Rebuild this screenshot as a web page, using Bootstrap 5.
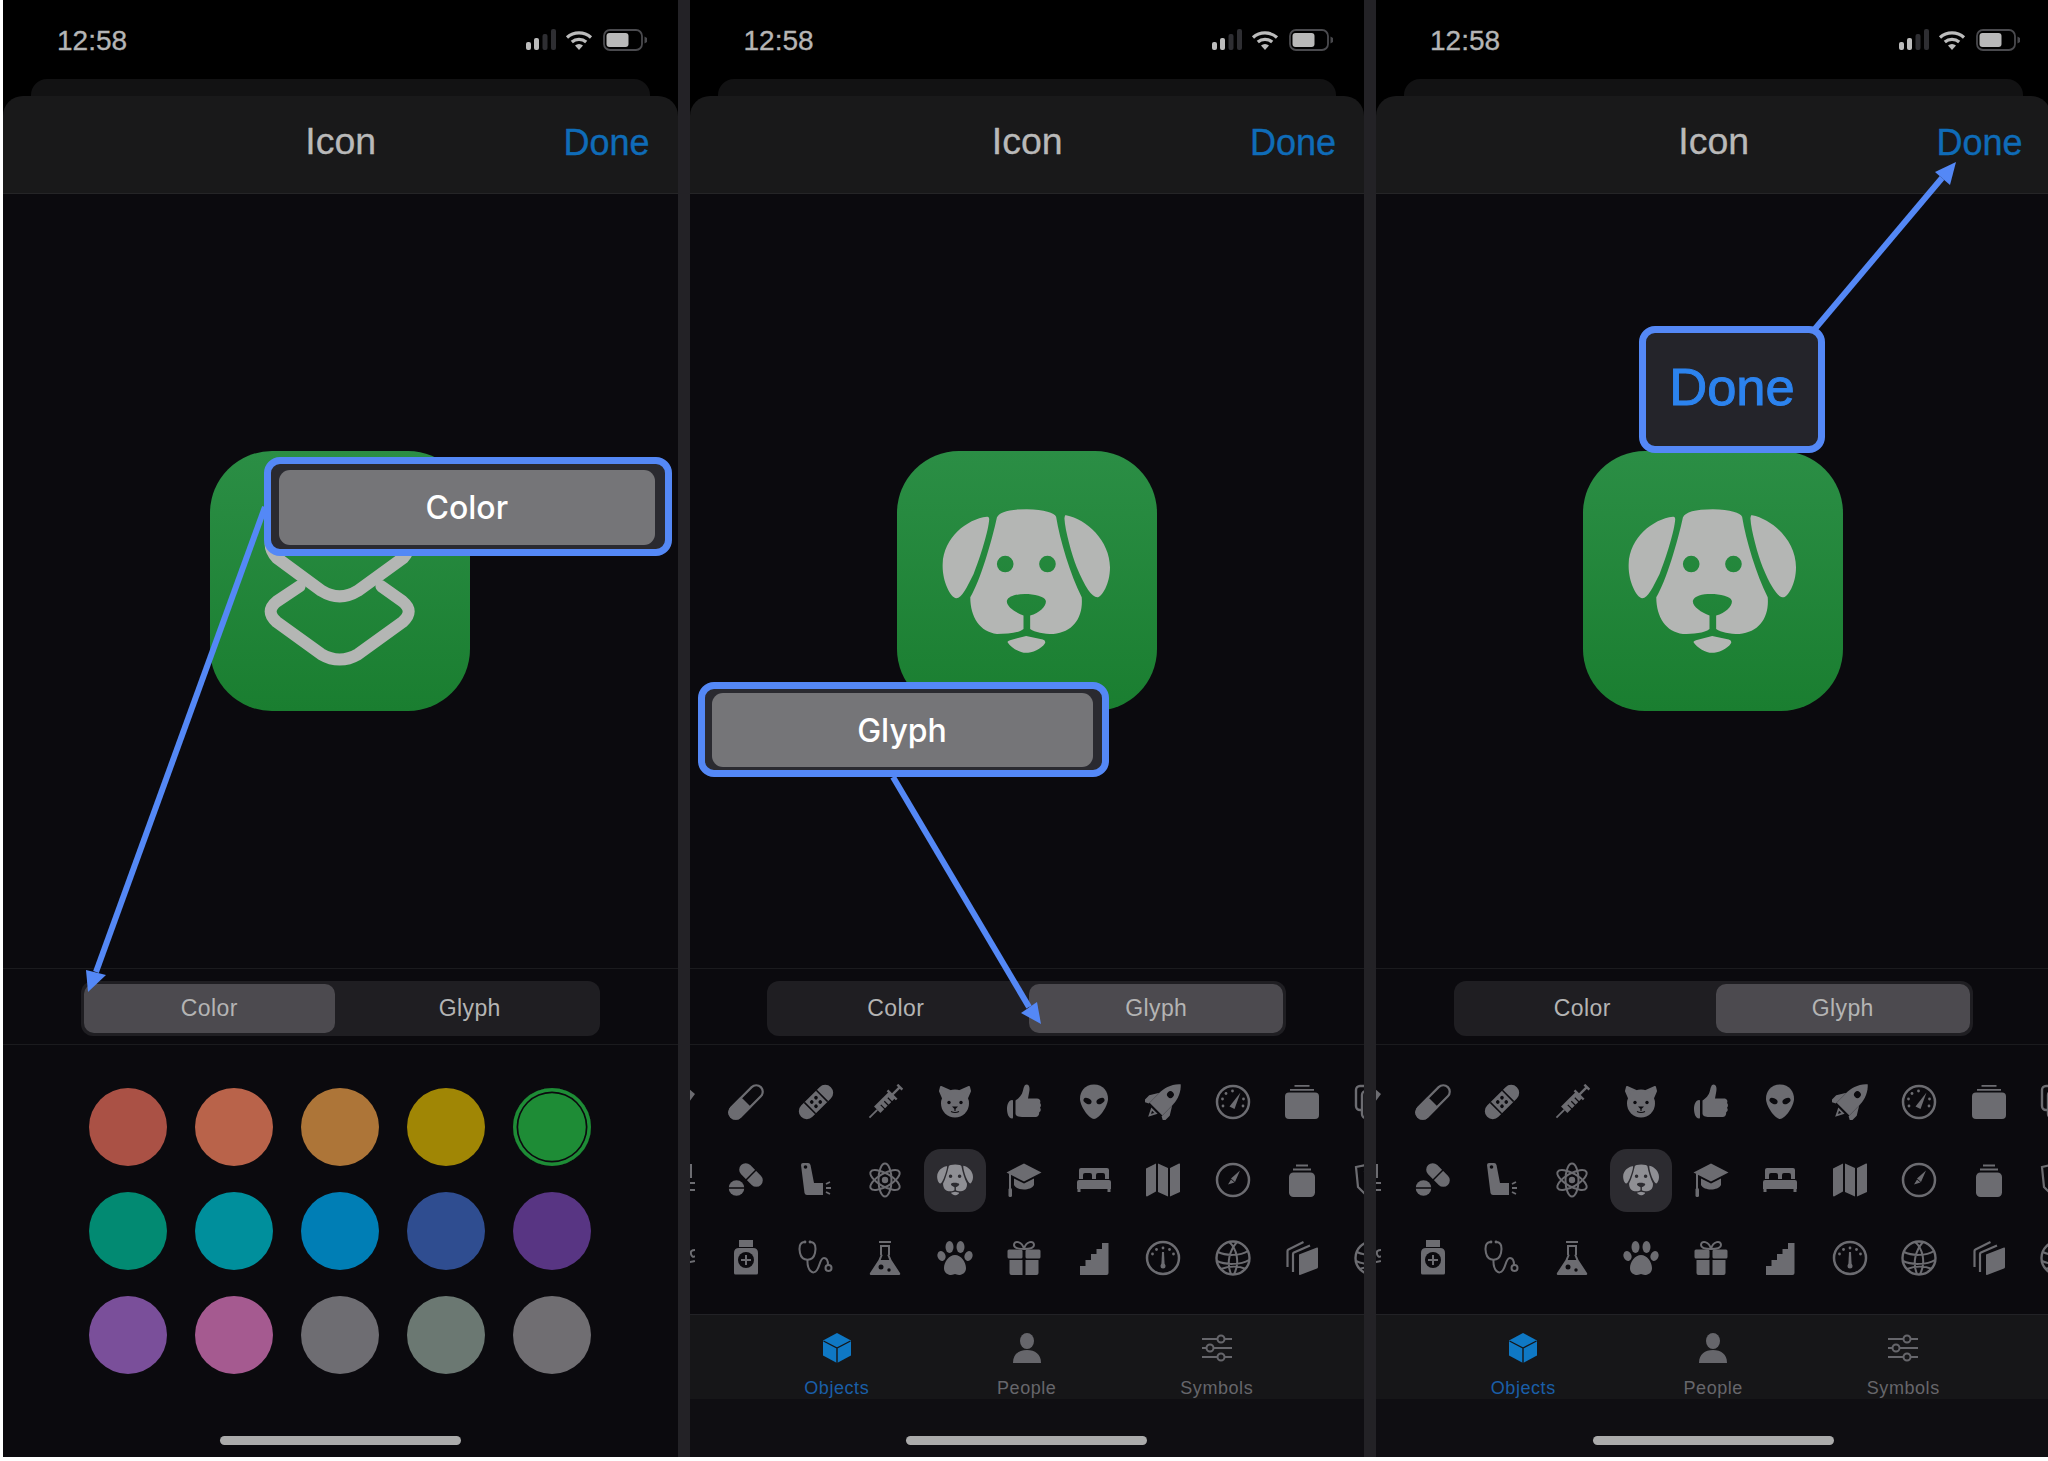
<!doctype html>
<html lang="en">
<head>
<meta charset="utf-8">
<title>Icon</title>
<link href="https://cdn.jsdelivr.net/npm/bootstrap@5.3.0/dist/css/bootstrap.min.css" rel="stylesheet">
<style>
html,body{background:#fff;margin:0;overflow:hidden}
body{font-family:"Liberation Sans",Arial,sans-serif}
.stage{height:1457px;width:2045px;margin-left:3px;background:#232226;gap:12px;overflow:hidden}
.phone{width:674.5px;flex:0 0 674.5px;height:1457px;background:#000;overflow:hidden}
.status-row{height:79px;padding:0 31px 0 54px;padding-top:26px;align-items:flex-start}
.clock{font-size:28px;line-height:29px;color:#b5b5b5;-webkit-text-stroke:.35px #b5b5b5}
.status-ico{width:121px;height:22px;margin-top:3px}
.under-sheet{height:17px;margin:0 28px;background:#121213;border-radius:16px 16px 0 0}
.sheet-head{height:98px;background:#19191a;border-radius:20px 20px 0 0;border-bottom:1px solid #252527;padding-bottom:4px}
.sheet-title{font-size:37.5px;color:#b9b9b9;line-height:1;-webkit-text-stroke:.3px #b9b9b9;margin-top:-1px;padding-left:1px}
.sheet-done{font-size:36px;color:#0f6cb8;line-height:1;right:28px;top:calc(50% - 2px);transform:translateY(-50%);text-decoration:none;-webkit-text-stroke:.4px #0f6cb8}
.sheet-main{background:#0b0a0e;min-height:0}
.preview-area{height:774px}
.app-tile{width:260px;height:260px;border-radius:62px;background:linear-gradient(#2b8e45,#1a7e30);color:#b4b6b4}
.app-tile svg{display:block}
.tile-dog{padding:58px 0 0 45px}
.seg-row{height:77px;border-top:1px solid #1b1b1e;border-bottom:1px solid #1b1b1e;padding-top:3px}
.seg-track{width:519px;height:55px;background:#1f1e22;border-radius:12px;padding:3px}
.seg-item{flex:0 0 auto;font-size:23px;letter-spacing:.4px;color:#b4b4b4;border:0;border-radius:10px;padding:0;line-height:49px;background:transparent}
.seg-item:hover,.seg-item:focus{color:#b4b4b4;background:transparent}
.seg-item.seg-on,.seg-item.seg-on:hover{background:#4c4a4f}
.seg-a1{width:251px}
.seg-a2{width:262px;padding-left:8px}
.seg-b1{width:259px;padding-right:8px}
.seg-b2{width:254px}
.swatch-grid{display:grid;grid-template-columns:repeat(5,78px);gap:26px 28px;padding-top:43px;justify-content:center}
.dot-swatch{width:78px;height:78px;border-radius:50%}
.sw1{background:#aa5145}.sw2{background:#b9634a}.sw3{background:#ad7538}.sw4{background:#a08605}
.sw5{background:#1e8c36;box-shadow:inset 0 0 0 3.5px #1e8c36,inset 0 0 0 5.2px #0b0a0e}
.sw6{background:#028a72}.sw7{background:#008f9c}.sw8{background:#007eb5}.sw9{background:#2f4d90}.sw10{background:#583583}
.sw11{background:#7a4f9a}.sw12{background:#a55a90}.sw13{background:#6e6d72}.sw14{background:#6b7872}.sw15{background:#706e72}
.home-pill{width:241px;height:9.5px;border-radius:5px;background:#ababab;margin:0 auto 12px}
.glyph-area{height:270px;overflow:hidden;padding-top:18px;border-bottom:1px solid #222226}
.glyph-grid{display:grid;grid-template-columns:repeat(11,69.5px);grid-auto-rows:78px;margin-left:-47.75px;width:764.5px;color:#6c6c71}
.glyph-cell{display:flex;align-items:center;justify-content:center}
.glyph-cell svg{width:36px;height:36px;overflow:visible}
.glyph-pick{background:#2c2b30;border-radius:17px;width:62px;height:63px;color:#8f8f94;display:flex;align-items:center;justify-content:center}
.tabs-row{height:84px;background:#161618;padding-top:18px}
.tab-one{width:190px;text-align:center;color:#66666b;font-size:18px;letter-spacing:.55px;line-height:22px}
.tab-one svg{display:block;margin:0 auto 14px;width:36px;height:30px;overflow:visible}
.tab-live{color:#1a5fa8}
.tab-live svg{color:#0f78c4}
.after-tabs{background:#0f0e12}
.mark-svg{left:0;top:0;width:675px;height:1457px;pointer-events:none}
.callout{border:7.5px solid #5488f6;border-radius:16px;background:#2a2a30}
.callout-btn{background:#757578;border-radius:11px;color:#fff;font-family:Inter,"Liberation Sans",sans-serif;font-weight:500;font-size:32px;padding-top:2px}
.call-a{left:261px;top:457px;width:408px;height:99px;padding:5.5px 10px 4px 7.5px}
.call-b{left:8px;top:682px;width:411px;height:95px;padding:4px 9px 3px 7px}
.call-c{left:263px;top:326px;width:186px;height:127px;background:#24242a;color:#2c83ee;font-family:"Liberation Sans",sans-serif;font-size:52.5px;-webkit-text-stroke:1px #2c83ee;padding-bottom:4px}
</style>
</head>
<body>
<svg width="0" height="0" class="position-absolute" aria-hidden="true">
<defs>
<symbol id="g-dog" viewBox="185 205 505 435"><path fill="currentColor" fill-rule="evenodd" d="M350 230Q360 205 440 205Q520 208 528 228C540 300 570 400 605 470C610 530 580 575 520 580C490 580 465 575 450 565L450 525C480 515 500 495 497 480C490 458 390 450 380 480C378 498 405 515 430 525L430 565C415 578 380 580 350 580C300 575 270 530 270 470C300 420 335 300 350 230ZM350 370a25 25 0 1 0 50 0a25 25 0 1 0-50 0ZM477 370a25 25 0 1 0 50 0a25 25 0 1 0-50 0ZM320 228C260 235 190 290 187 370C185 420 210 470 228 473C245 472 260 440 280 400C300 350 325 270 327 235Q326 226 320 228ZM558 223C620 235 690 300 690 380C690 430 665 470 652 470C635 470 615 440 590 380C575 340 555 270 553 232Q554 222 558 223ZM382 605Q382 600 392 598L438 586L488 597Q497 600 495 607C485 625 455 637 437 637C420 637 392 622 382 605Z"/></symbol>
<symbol id="g-pill" viewBox="0 0 36 36"><g transform="rotate(45 18 18)" fill="currentColor"><rect x="11.500" y="-3" width="13" height="42" rx="6.500" fill="none" stroke="currentColor" stroke-width="2.200"/><path d="M10.500 18h15v14.500a7.500 7.500 0 0 1-15 0z"/></g></symbol>
<symbol id="g-band" viewBox="0 0 36 36"><g transform="rotate(45 18 18)" fill="currentColor"><rect x="10" y="-3" width="16" height="42" rx="8"/><path d="M10 9.500h16M10 26.500h16" stroke="#0b0a0e" stroke-width="1.500"/><g fill="#0b0a0e"><circle cx="15" cy="15" r="1.800"/><circle cx="21" cy="15" r="1.800"/><circle cx="15" cy="21" r="1.800"/><circle cx="21" cy="21" r="1.800"/></g></g></symbol>
<symbol id="g-syr" viewBox="0 0 36 36"><g transform="rotate(45 18 18)" fill="currentColor"><rect x="13.500" y="8" width="9" height="21"/><path d="M18 29v11" stroke="currentColor" stroke-width="1.800"/><path d="M18 8V-3M14.500-3h7M11.500 8h13" stroke="currentColor" stroke-width="2.400" fill="none"/><path d="M17 13h6M17 18h6M17 23h6" stroke="#0b0a0e" stroke-width="1.200"/></g></symbol>
<symbol id="g-bear" viewBox="0 0 36 36"><g fill="currentColor" stroke="currentColor" stroke-width="2" stroke-linejoin="round"><path d="M4 3l9 4-7 7-3-7z"/><path d="M32 3l-9 4 7 7 3-7z"/></g><circle cx="18" cy="19.500" r="14" fill="currentColor" stroke="#0b0a0e" stroke-width="0"/><g fill="#0b0a0e"><circle cx="12" cy="18.500" r="1.700"/><circle cx="24" cy="18.500" r="1.700"/><path d="M15 22.500h6l-3 3z"/><path d="M18 25v2M14 27.500q4 2 8 0" stroke="#0b0a0e" stroke-width="1.100" fill="none"/></g></symbol>
<symbol id="g-thumb" viewBox="0 0 36 36"><path fill="currentColor" d="M1 25c0-5 2-9 5-9 .8 0 1 .5 1 1v16c0 1-.3 1.500-1 1.500-3 0-5-4.500-5-9.500zM9.500 16.500c3-2 6.500-5 7.500-10 .7-3 1.500-6 3.500-6 3 0 3.500 4 2.700 7.500L22 14.500h9c3 0 4 2.500 3 4.500 1.300 1.200 1.300 3.500 0 4.700 1.200 1.500 1 3.500-.8 4.500.2 2.800-1.200 4.800-3.700 4.800H16c-3.500 0-6.500-1-6.500-3.500z"/></symbol>
<symbol id="g-alien" viewBox="0 0 36 36"><path fill="currentColor" d="M18 .5C27.500.5 32 8 32 14.500 32 23 22.500 35 18 35S4 23 4 14.500C4 8 8.500.5 18 .5Z"/><ellipse cx="11.500" cy="17" rx="4.300" ry="2.700" transform="rotate(28 11.500 17)" fill="#0b0a0e"/><ellipse cx="24.500" cy="17" rx="4.300" ry="2.700" transform="rotate(-28 24.500 17)" fill="#0b0a0e"/></symbol>
<symbol id="g-rocket" viewBox="0 0 36 36"><g transform="rotate(45 18 18)" fill="currentColor"><path d="M18-7C25-1 27 8 27 14V28H9V14C9 8 11-1 18-7Z"/><path d="M9 14L3.500 23v9L9 29zM27 14L32.500 23v9L27 29z"/><circle cx="18" cy="7.500" r="3.400" fill="#0b0a0e"/><path d="M15 31h6l-3 6z" fill="none" stroke="currentColor" stroke-width="1.800"/></g></symbol>
<symbol id="g-gauge" viewBox="0 0 36 36"><circle cx="18" cy="18" r="16" fill="none" stroke="currentColor" stroke-width="2.500"/><g fill="currentColor"><path d="M14.500 22.500L25.500 8.500 19.500 25z"/><circle cx="8" cy="22" r="1.400"/><circle cx="7.500" cy="15" r="1.400"/><circle cx="11" cy="9.500" r="1.400"/><circle cx="17.500" cy="7" r="1.400"/><circle cx="28.500" cy="15" r="1.400"/><circle cx="28" cy="22" r="1.400"/></g></symbol>
<symbol id="g-jar" viewBox="0 0 36 36"><rect x="1" y="8.500" width="34" height="26.500" rx="4" fill="currentColor"/><path d="M6 5.800h24M10.500 1.800h15" stroke="currentColor" stroke-width="1.800"/></symbol>
<symbol id="g-docs" viewBox="0 0 36 36"><g fill="none" stroke="currentColor" stroke-width="2.400"><rect x="2" y="2" width="20" height="24" rx="4"/><rect x="8" y="7" width="20" height="27" rx="4" fill="#0b0a0e"/></g></symbol>
<symbol id="g-pills" viewBox="0 0 36 36"><g fill="currentColor"><g transform="rotate(-45 23 13)"><rect x="16.500" y="-1" width="13" height="28" rx="6.500"/><path d="M16 13h14" stroke="#0b0a0e" stroke-width="1.500"/></g><circle cx="8.500" cy="26" r="7.800"/><path d="M0 26h17" stroke="#0b0a0e" stroke-width="1.500"/></g></symbol>
<symbol id="g-inh" viewBox="0 0 36 36"><path fill="currentColor" d="M3 3q0-2 2-2h5q2 0 2.500 2L16 21h9v12H9q-2 0-2.500-2z"/><circle cx="7.500" cy="5" r="1.800" fill="#0b0a0e"/><path d="M28 26h5M28 22l4-2M28 30l4 2" stroke="currentColor" stroke-width="1.800" fill="none"/></symbol>
<symbol id="g-atom" viewBox="0 0 36 36"><g fill="none" stroke="currentColor" stroke-width="2"><ellipse cx="18" cy="18" rx="6.500" ry="16.500"/><ellipse cx="18" cy="18" rx="6.500" ry="16.500" transform="rotate(60 18 18)"/><ellipse cx="18" cy="18" rx="6.500" ry="16.500" transform="rotate(-60 18 18)"/></g><circle cx="18" cy="18" r="3.200" fill="currentColor"/></symbol>
<symbol id="g-cap" viewBox="0 0 36 36"><path fill="currentColor" d="M18 1.500L35.500 10.500 18 19.500.5 10.500zM8 16.500l10 5 10-5V23c-3 6-17 6-20 0z"/><path d="M4 12V27" stroke="currentColor" stroke-width="2"/><rect x="2.500" y="26" width="3.500" height="9" rx="1.500" fill="currentColor"/></symbol>
<symbol id="g-bed" viewBox="0 0 36 36"><path fill="currentColor" d="M5 6h26q2 0 2 2v9h-4v-4q0-2-2-2h-5q-2 0-2 2v4h-4v-4q0-2-2-2H9q-2 0-2 2v4H3V8q0-2 2-2zM1 20q0-2 2-2h30q2 0 2 2v7h-.5v3h-3v-3h-27v3h-3v-3H1z"/></symbol>
<symbol id="g-map" viewBox="0 0 36 36"><path fill="currentColor" d="M1 6.500L11 1.500V29.500L2 34.500Q1 34.500 1 33.500zM13 1.500L23 6V34.500L13 30zM25 6L34 1.500Q35 1 35 2.500V30L25 34.500z"/></symbol>
<symbol id="g-comp" viewBox="0 0 36 36"><circle cx="18" cy="18" r="16" fill="none" stroke="currentColor" stroke-width="2.500"/><path fill="currentColor" d="M16 16.500L25 8.500 20 20zM13 22.500l3-5 3.500 3z"/></symbol>
<symbol id="g-jar2" viewBox="0 0 36 36"><rect x="5" y="10.500" width="26" height="24.500" rx="4.500" fill="currentColor"/><path d="M9 7.500h18M12 3.500h12" stroke="currentColor" stroke-width="1.800"/></symbol>
<symbol id="g-shield" viewBox="0 0 36 36"><g fill="none" stroke="currentColor" stroke-width="2.200"><path d="M2 5l14-3 3 12-1 8-6 11-8-8z"/><path d="M10 10l12-2v24"/></g></symbol>
<symbol id="g-bottle" viewBox="0 0 36 36"><rect x="11" y="0" width="14" height="7" fill="currentColor"/><path fill="currentColor" d="M6 13q0-5 5-5h14q5 0 5 5v20q0 1.500-1.500 1.500h-21Q6 34.500 6 33z"/><circle cx="18" cy="20" r="8" fill="#0b0a0e"/><path d="M13 20h10M18 15v10" stroke="currentColor" stroke-width="2"/></symbol>
<symbol id="g-steth" viewBox="0 0 36 36"><g fill="none" stroke="currentColor" stroke-width="2"><path d="M7 2C1 2 1 8 2 13c2 9 13 9 15 0 1-5 1-11-5-11"/><path d="M9.500 20C9 30 15 36 19 30c3-4 3-12 7-12 3 0 4 3 4 7"/><circle cx="30.500" cy="28" r="3"/></g><circle cx="7" cy="2" r="1.400" fill="currentColor"/><circle cx="12" cy="2" r="1.400" fill="currentColor"/></symbol>
<symbol id="g-flask" viewBox="0 0 36 36"><path d="M12 2h12" stroke="currentColor" stroke-width="2"/><path d="M14 5v10" stroke="currentColor" stroke-width="2"/><path d="M22 5v10" stroke="currentColor" stroke-width="2"/><path fill="currentColor" d="M14 5h8v2h-8zM11.500 20L14 14l1.700 1-2 5h8.600l-2-5 1.700-1 2.500 6L33 33q.8 2-1 2H4q-1.800 0-1-2z"/><circle cx="14" cy="27" r="2.500" fill="#0b0a0e"/><circle cx="22" cy="30" r="1.700" fill="#0b0a0e"/></symbol>
<symbol id="g-paw" viewBox="0 0 36 36"><g fill="currentColor"><ellipse cx="4.500" cy="16" rx="4" ry="5" transform="rotate(-20 4.500 16)"/><ellipse cx="12.500" cy="7" rx="4" ry="6"/><ellipse cx="23.500" cy="7" rx="4" ry="6"/><ellipse cx="31.500" cy="16" rx="4" ry="5" transform="rotate(20 31.500 16)"/><path d="M18 15c6 0 11 7 11 13 0 5-4 7-7 7-2 0-3-1-4-1s-2 1-4 1c-3 0-7-2-7-7 0-6 5-13 11-13z"/></g></symbol>
<symbol id="g-gift" viewBox="0 0 36 36"><g fill="currentColor"><rect x="1.500" y="9.500" width="15" height="9" rx="1.500"/><rect x="19.500" y="9.500" width="15" height="9" rx="1.500"/><path d="M3.500 20h13v15h-11q-2 0-2-2zM19.500 20h13v13q0 2-2 2h-11z"/></g><path d="M18 9c-2-8-10-9-10-4 0 3 5 4 10 4zm0 0c2-8 10-9 10-4 0 3-5 4-10 4z" fill="none" stroke="currentColor" stroke-width="2"/></symbol>
<symbol id="g-stairs" viewBox="0 0 36 36"><path fill="currentColor" d="M4 35V26h5.500v-6H15v-6h5.500V9H26V3h6.500v30q0 2-2 2z"/></symbol>
<symbol id="g-gauge2" viewBox="0 0 36 36"><circle cx="18" cy="18" r="16" fill="none" stroke="currentColor" stroke-width="2.500"/><g fill="currentColor"><path d="M17 12h2l.7 14h-3.400z"/><circle cx="18" cy="26" r="2.500"/><circle cx="18" cy="8" r="1.400"/><circle cx="11.500" cy="9.500" r="1.400"/><circle cx="24.500" cy="9.500" r="1.400"/><circle cx="7.500" cy="14" r="1.400"/><circle cx="28.500" cy="14" r="1.400"/></g></symbol>
<symbol id="g-globe" viewBox="0 0 36 36"><g fill="none" stroke="currentColor" stroke-width="2"><circle cx="18" cy="18" r="16.500" stroke-width="2.400"/><path d="M14 2C22 8 25 24 19 34M22 2c-7 8-11 20-6 32M3 12c8 4 22 4 30-1M2 21c8 4 24 4 32-1M6 29c8-3 18-3 25 0"/></g></symbol>
<symbol id="g-books" viewBox="0 0 36 36"><path fill="currentColor" d="M15 14.500l18-7q1-.3 1 1V27q0 1-1 1.500L16 35q-1 .4-1-1z"/><path d="M3.500 27V11q0-1 1-1.500L19.500 2M9 32V14q0-1 1-1.500L26 5.500" fill="none" stroke="currentColor" stroke-width="2.200"/></symbol>
<symbol id="g-eL1" viewBox="0 0 36 36"><path fill="currentColor" d="M29 4l7 6-6 8-1-3 1-5z"/></symbol>
<symbol id="g-eL2" viewBox="0 0 36 36"><path d="M32 2v14M28 21h8M30 28h6" stroke="currentColor" stroke-width="2" fill="none"/></symbol>
<symbol id="g-eL3" viewBox="0 0 36 36"><path d="M36 10q-5 0-4 4t4 2M30 22q4 0 6-1" stroke="currentColor" stroke-width="2" fill="none"/></symbol>
<symbol id="g-cube" viewBox="0 0 36 30"><path fill="currentColor" d="M18 0L32 7.500V22.500L18 30 4 22.500V7.500z"/><path d="M4.500 8L18 15 31.500 8M18 15v15" stroke="#161618" stroke-width="1.400" fill="none"/></symbol>
<symbol id="g-person" viewBox="0 0 36 30"><ellipse cx="18" cy="8" rx="7" ry="8" fill="currentColor"/><path fill="currentColor" d="M4 30c0-9 6-13 14-13s14 4 14 13z"/></symbol>
<symbol id="g-slide" viewBox="0 0 36 30"><g fill="none" stroke="currentColor" stroke-width="2"><path d="M3 6h15M26 6h7M3 15h5M14 15h19M3 24h15M26 24h7"/><circle cx="22" cy="6" r="3.500"/><circle cx="11" cy="15" r="3.500"/><circle cx="22" cy="24" r="3.500"/></g></symbol>
<symbol id="g-status" viewBox="0 0 121 22"><g fill="#bcbcbc"><rect x="0" y="13" width="5" height="8" rx="2"/><rect x="8" y="9" width="5" height="12" rx="2"/></g><g fill="#2e2e32"><rect x="16.500" y="5" width="5" height="16" rx="2"/><rect x="25" y="0" width="5" height="21" rx="2"/></g><g fill="none" stroke="#bcbcbc" stroke-width="3.200"><path d="M41 8.500A18 18 0 0 1 65 8.500"/><path d="M45.800 13A11 11 0 0 1 60.200 13"/></g><path fill="#bcbcbc" d="M49 16.500A6 6 0 0 1 57 16.500L53 21z"/><rect x="78" y="1" width="38" height="20" rx="6" fill="none" stroke="#4a4a4e" stroke-width="1.800"/><rect x="80.500" y="4" width="22" height="14" rx="3" fill="#b9b9b9"/><path fill="#48484c" d="M118.500 7.500l2.500 1.500v4l-2.500 1.500z"/></symbol>
</defs>
</svg>

<main class="stage d-flex">

<!-- left -->
<section class="phone position-relative d-flex flex-column">
  <div class="status-row d-flex justify-content-between"><span class="clock">12:58</span><svg class="status-ico"><use href="#g-status"/></svg></div>
  <div class="under-sheet"></div>
  <header class="sheet-head position-relative d-flex align-items-center justify-content-center"><span class="sheet-title">Icon</span><a class="sheet-done position-absolute" href="#">Done</a></header>
  <div class="sheet-main flex-grow-1 d-flex flex-column">
    <div class="preview-area d-flex align-items-center justify-content-center">
      <div class="app-tile"><svg viewBox="62 60 778 778" width="260" height="260"><g fill="none" stroke="currentColor" stroke-width="36" stroke-linecap="round"><path d="M262 300Q225 340 262 380L395 478Q450 512 505 478L640 380Q675 340 640 300"/><path d="M330 465L262 510Q225 540 262 572L395 668Q450 700 505 668L638 572Q675 540 638 510L575 465"/></g></svg></div>
    </div>
    <div class="seg-row d-flex align-items-center justify-content-center">
      <div class="seg-track d-flex"><button class="btn seg-item seg-a1 seg-on" type="button">Color</button><button class="btn seg-item seg-a2" type="button">Glyph</button></div>
    </div>
    <div class="swatch-grid flex-grow-1 align-content-start">
      <div class="dot-swatch sw1"></div><div class="dot-swatch sw2"></div><div class="dot-swatch sw3"></div><div class="dot-swatch sw4"></div><div class="dot-swatch sw5"></div>
      <div class="dot-swatch sw6"></div><div class="dot-swatch sw7"></div><div class="dot-swatch sw8"></div><div class="dot-swatch sw9"></div><div class="dot-swatch sw10"></div>
      <div class="dot-swatch sw11"></div><div class="dot-swatch sw12"></div><div class="dot-swatch sw13"></div><div class="dot-swatch sw14"></div><div class="dot-swatch sw15"></div>
    </div>
    <div class="home-pill"></div>
  </div>
  <svg class="mark-svg position-absolute" viewBox="0 0 675 1457"><line x1="262" y1="507" x2="93" y2="972" stroke="#5488f6" stroke-width="6"/><polygon points="85,992 83,970 103,975" fill="#5488f6"/></svg>
  <div class="callout call-a position-absolute"><div class="callout-btn h-100 d-flex align-items-center justify-content-center">Color</div></div>
</section>

<!-- middle -->
<section class="phone position-relative d-flex flex-column">
  <div class="status-row d-flex justify-content-between"><span class="clock">12:58</span><svg class="status-ico"><use href="#g-status"/></svg></div>
  <div class="under-sheet"></div>
  <header class="sheet-head position-relative d-flex align-items-center justify-content-center"><span class="sheet-title">Icon</span><a class="sheet-done position-absolute" href="#">Done</a></header>
  <div class="sheet-main flex-grow-1 d-flex flex-column">
    <div class="preview-area d-flex align-items-center justify-content-center">
      <div class="app-tile tile-dog"><svg width="168" height="145"><use href="#g-dog"/></svg></div>
    </div>
    <div class="seg-row d-flex align-items-center justify-content-center">
      <div class="seg-track d-flex"><button class="btn seg-item seg-b1" type="button">Color</button><button class="btn seg-item seg-b2 seg-on" type="button">Glyph</button></div>
    </div>
    <div class="glyph-area">
      <div class="glyph-grid">
        <div class="glyph-cell"><svg><use href="#g-eL1"/></svg></div><div class="glyph-cell"><svg><use href="#g-pill"/></svg></div><div class="glyph-cell"><svg><use href="#g-band"/></svg></div><div class="glyph-cell"><svg><use href="#g-syr"/></svg></div><div class="glyph-cell"><svg><use href="#g-bear"/></svg></div><div class="glyph-cell"><svg><use href="#g-thumb"/></svg></div><div class="glyph-cell"><svg><use href="#g-alien"/></svg></div><div class="glyph-cell"><svg><use href="#g-rocket"/></svg></div><div class="glyph-cell"><svg><use href="#g-gauge"/></svg></div><div class="glyph-cell"><svg><use href="#g-jar"/></svg></div><div class="glyph-cell"><svg><use href="#g-docs"/></svg></div>
        <div class="glyph-cell"><svg><use href="#g-eL2"/></svg></div><div class="glyph-cell"><svg><use href="#g-pills"/></svg></div><div class="glyph-cell"><svg><use href="#g-inh"/></svg></div><div class="glyph-cell"><svg><use href="#g-atom"/></svg></div><div class="glyph-cell"><div class="glyph-pick"><svg><use href="#g-dog"/></svg></div></div><div class="glyph-cell"><svg><use href="#g-cap"/></svg></div><div class="glyph-cell"><svg><use href="#g-bed"/></svg></div><div class="glyph-cell"><svg><use href="#g-map"/></svg></div><div class="glyph-cell"><svg><use href="#g-comp"/></svg></div><div class="glyph-cell"><svg><use href="#g-jar2"/></svg></div><div class="glyph-cell"><svg><use href="#g-shield"/></svg></div>
        <div class="glyph-cell"><svg><use href="#g-eL3"/></svg></div><div class="glyph-cell"><svg><use href="#g-bottle"/></svg></div><div class="glyph-cell"><svg><use href="#g-steth"/></svg></div><div class="glyph-cell"><svg><use href="#g-flask"/></svg></div><div class="glyph-cell"><svg><use href="#g-paw"/></svg></div><div class="glyph-cell"><svg><use href="#g-gift"/></svg></div><div class="glyph-cell"><svg><use href="#g-stairs"/></svg></div><div class="glyph-cell"><svg><use href="#g-gauge2"/></svg></div><div class="glyph-cell"><svg><use href="#g-globe"/></svg></div><div class="glyph-cell"><svg><use href="#g-books"/></svg></div><div class="glyph-cell"><svg><use href="#g-globe"/></svg></div>
      </div>
    </div>
    <nav class="tabs-row d-flex justify-content-center">
      <div class="tab-one tab-live"><svg><use href="#g-cube"/></svg>Objects</div>
      <div class="tab-one"><svg><use href="#g-person"/></svg>People</div>
      <div class="tab-one"><svg><use href="#g-slide"/></svg>Symbols</div>
    </nav>
    <div class="after-tabs flex-grow-1 d-flex align-items-end"><div class="home-pill"></div></div>
  </div>
  <svg class="mark-svg position-absolute" viewBox="0 0 675 1457"><line x1="203" y1="777" x2="339" y2="1007" stroke="#5488f6" stroke-width="6"/><polygon points="351,1024 331,1013 347,1002" fill="#5488f6"/></svg>
  <div class="callout call-b position-absolute"><div class="callout-btn h-100 d-flex align-items-center justify-content-center">Glyph</div></div>
</section>

<!-- right -->
<section class="phone position-relative d-flex flex-column">
  <div class="status-row d-flex justify-content-between"><span class="clock">12:58</span><svg class="status-ico"><use href="#g-status"/></svg></div>
  <div class="under-sheet"></div>
  <header class="sheet-head position-relative d-flex align-items-center justify-content-center"><span class="sheet-title">Icon</span><a class="sheet-done position-absolute" href="#">Done</a></header>
  <div class="sheet-main flex-grow-1 d-flex flex-column">
    <div class="preview-area d-flex align-items-center justify-content-center">
      <div class="app-tile tile-dog"><svg width="168" height="145"><use href="#g-dog"/></svg></div>
    </div>
    <div class="seg-row d-flex align-items-center justify-content-center">
      <div class="seg-track d-flex"><button class="btn seg-item seg-b1" type="button">Color</button><button class="btn seg-item seg-b2 seg-on" type="button">Glyph</button></div>
    </div>
    <div class="glyph-area">
      <div class="glyph-grid">
        <div class="glyph-cell"><svg><use href="#g-eL1"/></svg></div><div class="glyph-cell"><svg><use href="#g-pill"/></svg></div><div class="glyph-cell"><svg><use href="#g-band"/></svg></div><div class="glyph-cell"><svg><use href="#g-syr"/></svg></div><div class="glyph-cell"><svg><use href="#g-bear"/></svg></div><div class="glyph-cell"><svg><use href="#g-thumb"/></svg></div><div class="glyph-cell"><svg><use href="#g-alien"/></svg></div><div class="glyph-cell"><svg><use href="#g-rocket"/></svg></div><div class="glyph-cell"><svg><use href="#g-gauge"/></svg></div><div class="glyph-cell"><svg><use href="#g-jar"/></svg></div><div class="glyph-cell"><svg><use href="#g-docs"/></svg></div>
        <div class="glyph-cell"><svg><use href="#g-eL2"/></svg></div><div class="glyph-cell"><svg><use href="#g-pills"/></svg></div><div class="glyph-cell"><svg><use href="#g-inh"/></svg></div><div class="glyph-cell"><svg><use href="#g-atom"/></svg></div><div class="glyph-cell"><div class="glyph-pick"><svg><use href="#g-dog"/></svg></div></div><div class="glyph-cell"><svg><use href="#g-cap"/></svg></div><div class="glyph-cell"><svg><use href="#g-bed"/></svg></div><div class="glyph-cell"><svg><use href="#g-map"/></svg></div><div class="glyph-cell"><svg><use href="#g-comp"/></svg></div><div class="glyph-cell"><svg><use href="#g-jar2"/></svg></div><div class="glyph-cell"><svg><use href="#g-shield"/></svg></div>
        <div class="glyph-cell"><svg><use href="#g-eL3"/></svg></div><div class="glyph-cell"><svg><use href="#g-bottle"/></svg></div><div class="glyph-cell"><svg><use href="#g-steth"/></svg></div><div class="glyph-cell"><svg><use href="#g-flask"/></svg></div><div class="glyph-cell"><svg><use href="#g-paw"/></svg></div><div class="glyph-cell"><svg><use href="#g-gift"/></svg></div><div class="glyph-cell"><svg><use href="#g-stairs"/></svg></div><div class="glyph-cell"><svg><use href="#g-gauge2"/></svg></div><div class="glyph-cell"><svg><use href="#g-globe"/></svg></div><div class="glyph-cell"><svg><use href="#g-books"/></svg></div><div class="glyph-cell"><svg><use href="#g-globe"/></svg></div>
      </div>
    </div>
    <nav class="tabs-row d-flex justify-content-center">
      <div class="tab-one tab-live"><svg><use href="#g-cube"/></svg>Objects</div>
      <div class="tab-one"><svg><use href="#g-person"/></svg>People</div>
      <div class="tab-one"><svg><use href="#g-slide"/></svg>Symbols</div>
    </nav>
    <div class="after-tabs flex-grow-1 d-flex align-items-end"><div class="home-pill"></div></div>
  </div>
  <svg class="mark-svg position-absolute" viewBox="0 0 675 1457"><line x1="438" y1="330" x2="566" y2="178" stroke="#5488f6" stroke-width="6"/><polygon points="580,162 559,172 574,185" fill="#5488f6"/></svg>
  <div class="callout call-c position-absolute d-flex align-items-center justify-content-center">Done</div>
</section>

</main>
<script src="https://cdn.jsdelivr.net/npm/bootstrap@5.3.0/dist/js/bootstrap.bundle.min.js"></script>
</body>
</html>
